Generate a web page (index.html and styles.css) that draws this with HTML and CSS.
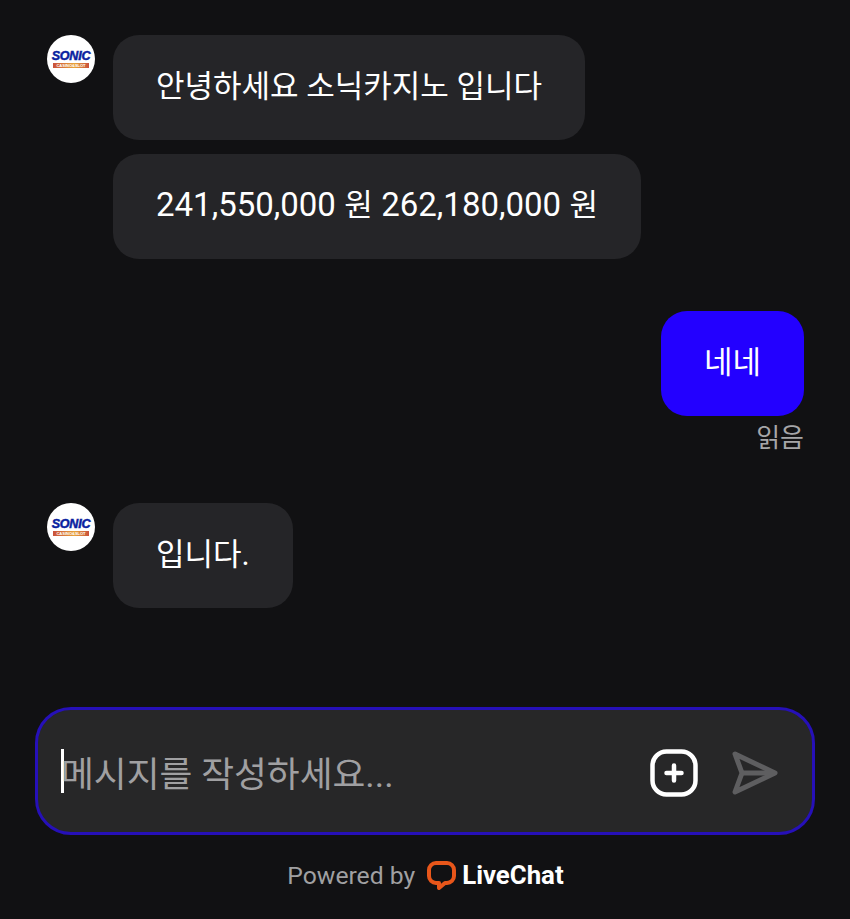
FILE: index.html
```html
<!DOCTYPE html>
<html lang="ko">
    <head>
        <meta charset="UTF-8" />
        <meta name="viewport" content="width=device-width, initial-scale=1.0" />
        <title>LiveChat</title>
        <link rel="stylesheet" href="styles.css">
    </head>
    <body>
        <div class="chat">
            <!-- Messages -->
            <div class="messages">
                <div class="group">
                    <div class="avatar">
                        <span class="logo-name">SONIC</span>
                        <span class="logo-sub">CASINO&amp;SLOT</span>
                    </div>
                    <div class="bubbles">
                        <div class="bubble"><span>안녕하세요 소닉카지노 입니다</span></div>
                        <div class="bubble"><span class="money"><span class="num">241,550,000</span> 원 <span class="num">262,180,000</span> 원</span></div>
                    </div>
                </div>

                <div class="group-mine">
                    <div class="bubble bubble-mine"><span>네네</span></div>
                    <div class="read">읽음</div>
                </div>

                <div class="group">
                    <div class="avatar">
                        <span class="logo-name">SONIC</span>
                        <span class="logo-sub">CASINO&amp;SLOT</span>
                    </div>
                    <div class="bubbles">
                        <div class="bubble"><span>입니다.</span></div>
                    </div>
                </div>
            </div>

            <!-- Message box -->
            <div class="composer">
                <div class="placeholder"><span class="caret"></span>메시지를 작성하세요...</div>
                <svg class="icon-add" width="48" height="48" viewBox="0 0 48 48" fill="none" stroke="#fff" stroke-linecap="round">
                    <rect x="2.500" y="2.500" width="43" height="43" rx="14" stroke-width="4.500" />
                    <path d="M24 16.500v15M16.500 24h15" stroke-width="4.500" />
                </svg>
                <svg class="icon-send" width="46" height="44" viewBox="0 0 46 44" fill="none" stroke="#5e5e60" stroke-width="5" stroke-linejoin="round">
                    <path d="M3 3l40 19L3 41l7-19z" />
                    <path d="M10 22h33" />
                </svg>
            </div>

            <!-- Footer -->
            <div class="footer">
                <span class="powered">Powered by</span>
                <svg width="29" height="30" viewBox="0 0 29 30" fill="none" stroke="#e8561a" stroke-width="4" stroke-linejoin="round">
                    <path d="M9 3h11a7 7 0 0 1 7 7v6a7 7 0 0 1-7 7h-2l-6 5v-5H9a7 7 0 0 1-7-7v-6a7 7 0 0 1 7-7z" />
                </svg>
                <span class="brand">LiveChat</span>
            </div>
        </div>
    </body>
</html>
```

FILE: styles.css
```css
* {
    box-sizing: border-box;
}

body {
    margin: 0;
    background-color: #111113;
    font-family: Roboto, "Noto Sans CJK KR", sans-serif;
}

.chat {
    height: 919px;
    display: flex;
    flex-direction: column;
    overflow: hidden;
}

.messages {
    flex: 1;
    padding: 35px 46px 0 47px;
}

.group {
    display: flex;
    gap: 18px;
}

.group-mine {
    display: flex;
    flex-direction: column;
    align-items: flex-end;
    margin: 52px 0 49px;
}

/* Logo */
.avatar {
    width: 48px;
    height: 48px;
    padding-bottom: 1px;
    border-radius: 50%;
    background-color: #fff;
    display: flex;
    flex-direction: column;
    align-items: center;
    justify-content: center;
}

.logo-name {
    color: #0a1fa0;
    font-family: "Liberation Sans", sans-serif;
    font-size: 12.500px;
    font-style: italic;
    font-weight: 700;
    line-height: 12px;
    letter-spacing: -0.2px;
    -webkit-text-stroke: 0.5px #0a1fa0;
}

.logo-sub {
    margin-top: 1px;
    background: linear-gradient(90deg, #c9503c, #e8a33a 60%, #c9503c);
    color: #fff;
    font-family: "Liberation Sans", sans-serif;
    font-size: 4px;
    font-weight: 700;
    line-height: 5px;
    padding: 0 3px;
}

.bubbles {
    display: flex;
    flex-direction: column;
    align-items: flex-start;
    gap: 14px;
}

.bubble {
    height: 105px;
    padding: 0 43px 8px;
    display: flex;
    align-items: center;
    background-color: #252528;
    border-radius: 26px;
    color: #fff;
    font-size: 31px;
}

.money {
    word-spacing: 0.700px;
}

.num {
    font-size: 33px;
}

.bubble-mine {
    background-color: #2300ff;
}

.read {
    margin-top: 6px;
    color: #a6a6a8;
    font-size: 26px;
    line-height: 32px;
}

/* Message box */
.composer {
    height: 128px;
    margin: 0 35px;
    padding: 0 33px 0 23px;
    display: flex;
    align-items: center;
    background-color: #272728;
    border: 3px solid #2610b8;
    border-radius: 36px;
}

.placeholder {
    flex: 1;
    display: flex;
    align-items: center;
    color: #a0a0a2;
    font-size: 35.700px;
}

.caret {
    width: 3px;
    height: 44px;
    margin-right: -3px;
    background-color: #fff;
}

.icon-add {
    margin-top: 3px;
}

.icon-send {
    margin: 3px 1px 0 34px;
}

/* Footer */
.footer {
    height: 84px;
    padding: 0 0 4px 1px;
    display: flex;
    align-items: center;
    justify-content: center;
    gap: 8px;
}

.powered {
    margin-right: 4px;
    color: #a0a0a2;
    font-size: 24.700px;
}

.brand {
    margin-left: -2px;
    color: #fff;
    font-size: 25.800px;
    font-weight: 700;
}
```
